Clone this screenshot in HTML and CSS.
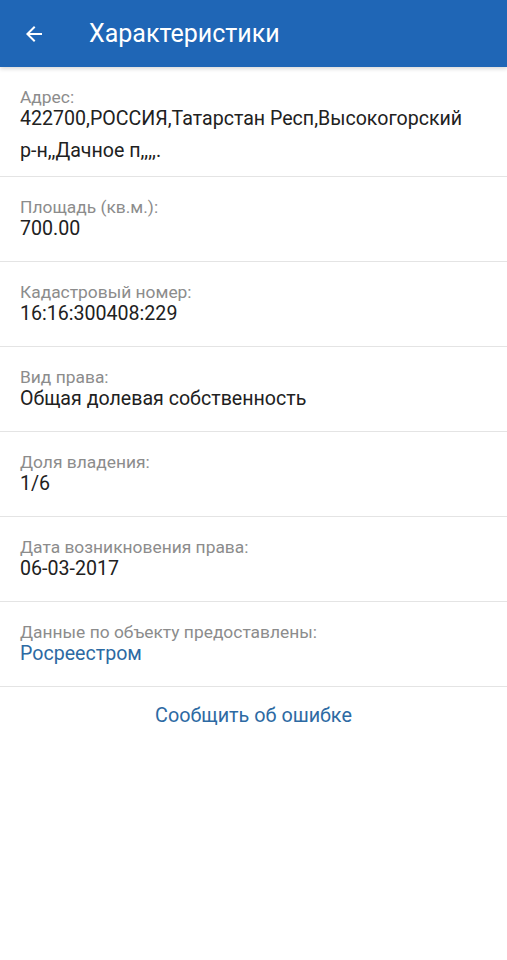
FILE: index.html
```html
<!DOCTYPE html>
<html lang="ru">
<head>
    <meta charset="UTF-8">
    <meta name="viewport" content="width=device-width, initial-scale=1.0">
    <title>Характеристики</title>
    <link rel="stylesheet" href="styles.css">
</head>
<body>
    <header class="app-bar">
        <svg class="back-icon" width="24" height="24" viewBox="0 0 24 24">
            <path d="M20 11H7.83l5.59-5.59L12 4l-8 8 8 8 1.41-1.41L7.83 13H20v-2z" fill="#fff"/>
        </svg>
        <h1 class="app-title">Характеристики</h1>
    </header>
    <div class="details">
        <div class="detail-row">
            <div class="detail-label">Адрес:</div>
            <div class="detail-value address">422700,РОССИЯ,Татарстан Респ,Высокогорский р&#8209;н,,Дачное п,,,,.</div>
        </div>
        <div class="detail-row">
            <div class="detail-label">Площадь (кв.м.):</div>
            <div class="detail-value">700.00</div>
        </div>
        <div class="detail-row">
            <div class="detail-label">Кадастровый номер:</div>
            <div class="detail-value">16:16:300408:229</div>
        </div>
        <div class="detail-row">
            <div class="detail-label">Вид права:</div>
            <div class="detail-value">Общая долевая собственность</div>
        </div>
        <div class="detail-row">
            <div class="detail-label">Доля владения:</div>
            <div class="detail-value">1/6</div>
        </div>
        <div class="detail-row">
            <div class="detail-label">Дата возникновения права:</div>
            <div class="detail-value">06-03-2017</div>
        </div>
        <div class="detail-row">
            <div class="detail-label">Данные по объекту предоставлены:</div>
            <div class="detail-value link">Росреестром</div>
        </div>
    </div>
    <div class="report">
        <a class="report-link" href="#">Сообщить об ошибке</a>
    </div>
</body>
</html>
```

FILE: styles.css
```css
body {
    font-family: Roboto, "Noto Sans", sans-serif;
    background-color: #fff;
    margin: 0;
    padding: 0;
}
.app-bar {
    height: 67px;
    background-color: #1f66b6;
    display: flex;
    align-items: center;
    padding: 0 0 0 22px;
    box-shadow: 0 2px 4px rgba(0, 0, 0, 0.15);
    position: relative;
}
.back-icon {
    flex-shrink: 0;
}
.app-title {
    margin: 0 0 0 43px;
    color: #fff;
    font-size: 25px;
    font-weight: 400;
}
.detail-row {
    padding: 20px 20px 20px;
    border-bottom: 1px solid #e4e4e4;
}
.detail-label {
    font-size: 17.4px;
    line-height: 20px;
    color: #8c8c8c;
}
.detail-value {
    font-size: 19.6px;
    line-height: 24px;
    color: #212121;
}
.detail-value.address {
    line-height: 32px;
    margin-top: -4px;
    margin-bottom: -11px;
}
.detail-value.link {
    color: #2d6aa3;
}
.report {
    text-align: center;
    padding: 17px 0;
}
.report-link {
    font-size: 19.8px;
    color: #2d6aa3;
    text-decoration: none;
}
```
